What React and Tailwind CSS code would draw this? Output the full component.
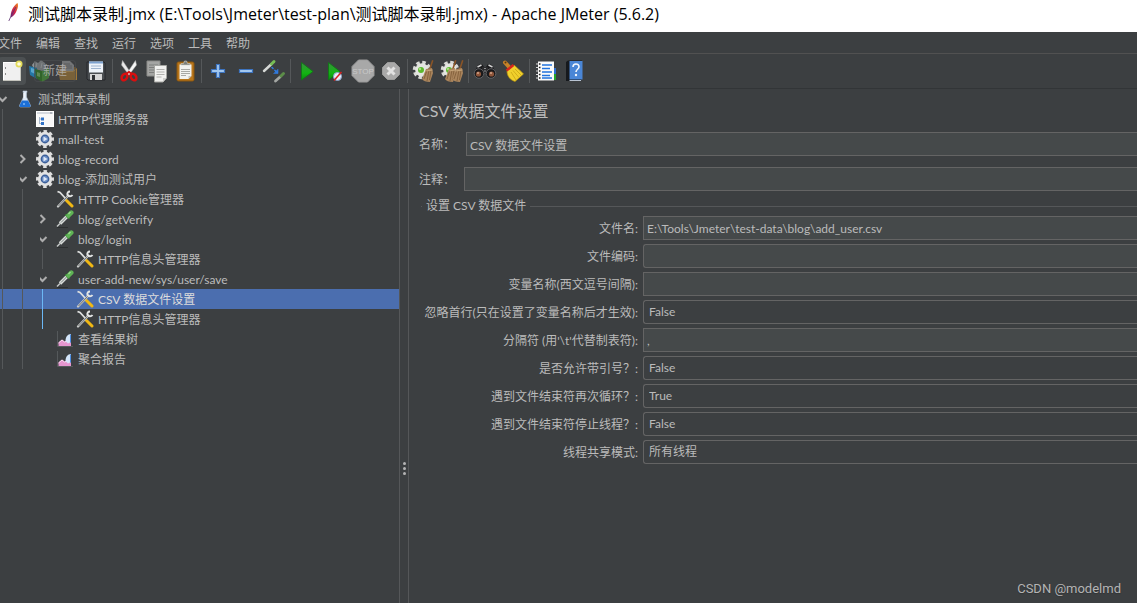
import clsx from 'clsx';

/* ---------- toolbar icons ---------- */

const NewIcon = () => (
  <svg viewBox="0 0 24 24" className="h-6 w-6">
    <rect x="3.5" y="3.5" width="17" height="18" fill="#f0f0f0" stroke="#fff" />
    <path d="M3 21.500h18M20.500 8v14" stroke="#c4c4bd" />
    <path d="M5.500 8v2M5.500 14v2" stroke="#8b8b8b" />
    <circle cx="19" cy="5" r="3.500" fill="#e3dc5a" />
    <circle cx="19" cy="5" r="1.800" fill="#fffde0" />
  </svg>
);

const TemplatesIcon = () => (
  <svg viewBox="0 0 24 24" className="h-6 w-6">
    <path d="M4 6l3-4 3 2 3-3 4 3 2 6-5 2-8-2z" fill="#8f9496" />
    <path d="M8 8l1-4M13 9l1-5" stroke="#b5babc" />
    <path d="M1 7l8 2v11l-7-4z" fill="#2477a6" />
    <path d="M3 9l4 1v5l-4-2z" fill="#5aa5cc" />
    <path d="M7 10l7 2v11l-6-4z" fill="#2b7d1c" />
    <path d="M14 12l7-3v10l-7 4z" fill="#479a34" />
    <path d="M9 13l3 1v4l-3-1z" fill="#79b962" />
  </svg>
);

const OpenIcon = () => (
  <svg viewBox="0 0 24 24" className="h-6 w-6">
    <path d="M3 9V6h6l2 2h9v13H5z" fill="#8e6427" />
    <path d="M6 2h8l4 4v8H6z" fill="#979899" />
    <path d="M8 5h6M8 7h8M8 9h8" stroke="#6c6d6e" />
    <path d="M2 12h15l4-3v12H4z" fill="#a27835" />
    <path d="M3 12.500h14l3-2.500" fill="none" stroke="#c49a55" />
  </svg>
);

const SaveIcon = () => (
  <svg viewBox="0 0 24 24" className="h-6 w-6">
    <path d="M3 3h17l1 1v17H4l-1-1z" fill="#4b4f52" stroke="#25272a" />
    <rect x="5" y="2.500" width="14" height="11" fill="#eef3f9" />
    <rect x="5" y="2.500" width="14" height="2" fill="#7da2cf" />
    <path d="M7 7h10M7 9.500h10" stroke="#9eb4cf" />
    <rect x="6" y="15" width="12" height="6" fill="#d6d6d6" />
    <rect x="8" y="16" width="3" height="5" fill="#303235" />
  </svg>
);

const CutIcon = () => (
  <svg viewBox="0 0 24 24" className="h-6 w-6" fill="none">
    <path d="M5.500 1.500L14.500 15l-2.500 1L4.500 6z" fill="#e9e9e9" stroke="#aaa" strokeWidth=".5" />
    <path d="M18.500 1.500L9.500 15l2.500 1 7.500-10z" fill="#f7f7f7" stroke="#aaa" strokeWidth=".5" />
    <ellipse cx="7.500" cy="18" rx="2.500" ry="3.500" stroke="#d80f0f" strokeWidth="2.500" transform="rotate(35 7.500 18)" />
    <ellipse cx="16.500" cy="18" rx="2.500" ry="3.500" stroke="#d80f0f" strokeWidth="2.500" transform="rotate(-35 16.500 18)" />
    <path d="M9 15l3-2 3 2" stroke="#d80f0f" strokeWidth="2" />
  </svg>
);

const CopyIcon = () => (
  <svg viewBox="0 0 24 24" className="h-6 w-6">
    <path d="M2 2h13v15H2z" fill="#a4a5a3" stroke="#8b8c89" />
    <path d="M4 6h9M4 8.500h9M4 11h9M4 13.500h5" stroke="#7d7e7c" />
    <path d="M9.500 6.500h12V19l-3.500 4H9.500z" fill="#f1f1ef" stroke="#a4a5a1" />
    <path d="M11.500 10.500h8M11.500 13h8M11.500 15.500h8M11.500 18h5" stroke="#b1b1ae" />
    <path d="M18 23v-4h3.500z" fill="#cfcfcc" />
  </svg>
);

const PasteIcon = () => (
  <svg viewBox="0 0 24 24" className="h-6 w-6">
    <rect x="4" y="3" width="17" height="19" rx="1.500" fill="#b9761b" stroke="#8a560f" />
    <path d="M6.500 5.500h12V17l-3 3h-9z" fill="#f2f2f0" />
    <path d="M8 10.500h9M8 12.500h9M8 14.500h9M8 16.500h5" stroke="#a9a9a6" />
    <path d="M15.500 20v-3h3z" fill="#c2c2bf" />
    <path d="M8 6V4.500h2.500L11.500 2h2l1 2.500H17V6z" fill="#7b7e7a" stroke="#d0d0ce" strokeWidth=".6" />
  </svg>
);

const PlusIcon = () => (
  <svg viewBox="0 0 24 24" className="h-6 w-6">
    <path d="M10.500 5.500h3v5h5v3h-5v5h-3v-5h-5v-3h5z" fill="#a3c8ef" stroke="#3d74c0" strokeWidth="1.200" />
  </svg>
);

const MinusIcon = () => (
  <svg viewBox="0 0 24 24" className="h-6 w-6">
    <path d="M5.500 10.500h13v3h-13z" fill="#a3c8ef" stroke="#3d74c0" strokeWidth="1.200" />
  </svg>
);

const ToggleIcon = () => (
  <svg viewBox="0 0 24 24" className="h-6 w-6" fill="none" strokeLinecap="round">
    <path d="M2 12l7-6.500" stroke="#d6d9d6" strokeWidth="2.400" />
    <path d="M9.500 5l2.500-2.500" stroke="#77bf55" strokeWidth="3" />
    <path d="M10 8.500l5 5" stroke="#2f7be0" strokeWidth="1.500" strokeDasharray="1.500 2.500" />
    <path d="M16 10.500v4h-4z" fill="#2f7be0" stroke="#2f7be0" strokeWidth=".6" />
    <path d="M13.500 22l4.500-4" stroke="#a4a7a4" strokeWidth="2.800" />
    <path d="M19 17l2.500-2.500" stroke="#5c8d49" strokeWidth="3" />
  </svg>
);

const StartIcon = () => (
  <svg viewBox="0 0 24 24" className="h-6 w-6">
    <defs>
      <linearGradient id="play" x1="0" y1="0" x2="0" y2="1">
        <stop offset="0" stopColor="#3a8f40" />
        <stop offset=".6" stopColor="#12b512" />
        <stop offset="1" stopColor="#0a8a10" />
      </linearGradient>
    </defs>
    <path d="M6.500 3.500L18 12.500 6.500 21z" fill="url(#play)" stroke="#0b7a12" strokeWidth=".8" />
  </svg>
);

const StartNoTimersIcon = () => (
  <svg viewBox="0 0 24 24" className="h-6 w-6">
    <path d="M5.500 3.500L17 12.500 5.500 21z" fill="url(#play)" stroke="#0b7a12" strokeWidth=".8" />
    <circle cx="14.500" cy="17.500" r="4" fill="#e9eef7" stroke="#8aa3cc" />
    <path d="M11 21.500l7.500-8.500" stroke="#d62020" strokeWidth="1.500" />
  </svg>
);

const StopIcon = () => (
  <svg viewBox="0 0 24 24" className="h-6 w-6">
    <path d="M7.500 1h9L23 7.500v9L16.500 23h-9L1 16.500v-9z" fill="#a8a8a8" stroke="#9b9b9b" />
    <text x="12" y="15" textAnchor="middle" fontSize="8" fontFamily="Liberation Sans, sans-serif" fill="#c9c9c9">
      STOP
    </text>
  </svg>
);

const ShutdownIcon = () => (
  <svg viewBox="0 0 24 24" className="h-6 w-6">
    <path d="M8.500 3.500h7l5 5v7l-5 5h-7l-5-5v-7z" fill="#a9a9a9" stroke="#9c9c9c" />
    <path d="M8.500 8.500l7 7M15.500 8.500l-7 7" stroke="#e2e2e2" strokeWidth="3" />
  </svg>
);

const Cog = ({ x = 0 }) => (
  <g transform={`translate(${x} 0)`}>
    <circle cx="10" cy="11" r="7.500" fill="none" stroke="#d9dad6" strokeWidth="3.500" strokeDasharray="3.400 2.490" />
    <circle cx="10" cy="11" r="6.800" fill="#e4e5e1" />
    <circle cx="9" cy="11" r="3" fill="#5cb82c" />
    <circle cx="8" cy="10" r="1.200" fill="#a6e07e" />
  </g>
);

const Broom = ({ x = 0 }) => (
  <g transform={`translate(${x} 0)`}>
    <path d="M20 1l1.500.5-3 9-1.500-.5z" fill="#8a5426" />
    <path d="M14 10l6-1 1 5-3 9c-4 0-7-1-8-3z" fill="#a9845c" />
    <path d="M15 11l-3 9M17 11l-2 11M19 11l-1.500 10" stroke="#7d5a36" strokeWidth=".8" />
    <path d="M13.500 12l7-1" stroke="#c7a67b" />
  </g>
);

const ClearIcon = () => (
  <svg viewBox="0 0 24 24" className="h-6 w-6">
    <Cog />
    <Broom />
  </svg>
);

const ClearAllIcon = () => (
  <svg viewBox="0 0 24 24" className="h-6 w-6">
    <Cog />
    <Broom x={-5} />
    <Broom x={2} />
  </svg>
);

const SearchIcon = () => (
  <svg viewBox="0 0 24 24" className="h-6 w-6">
    <path d="M5 6l4-1 2 3v9H2v-5z" fill="#1a1a1c" />
    <path d="M19 6l-4-1-2 3v9h9v-5z" fill="#1a1a1c" />
    <rect x="9" y="8" width="6" height="6" fill="#2b2b2d" />
    <path d="M11 9.500h2M11 12h2" stroke="#8b8d8f" />
    <path d="M4.500 8l4-2M15.500 6l4 2" stroke="#d4d4d4" strokeWidth="1.400" />
    <circle cx="6" cy="14.500" r="4.800" fill="#19191b" stroke="#6e7072" strokeWidth=".8" />
    <circle cx="18" cy="14.500" r="4.800" fill="#19191b" stroke="#6e7072" strokeWidth=".8" />
    <circle cx="5.500" cy="15" r="2.600" fill="#8e553a" />
    <circle cx="18.500" cy="15" r="2.600" fill="#8e553a" />
    <circle cx="5" cy="14" r="1" fill="#d3a78c" />
    <circle cx="18" cy="14" r="1" fill="#d3a78c" />
  </svg>
);

const ResetSearchIcon = () => (
  <svg viewBox="0 0 24 24" className="h-6 w-6">
    <path d="M4 3.500l4.500 5" stroke="#c78228" strokeWidth="4" strokeLinecap="round" />
    <circle cx="4.500" cy="3.500" r="1" fill="#5a3a10" />
    <path d="M6 12l7-6c3 3 6 5 9.500 9L14 22.500C9 21 6 17 6 12z" fill="#f0d02c" stroke="#b8940e" strokeWidth=".7" />
    <path d="M10 13l5 8M12 11.500l6 7M14 10l6 6" stroke="#c9a414" strokeWidth=".8" />
    <path d="M5.500 11.500L12.500 6" stroke="#d7241c" strokeWidth="2.500" />
  </svg>
);

const FunctionIcon = () => (
  <svg viewBox="0 0 24 24" className="h-6 w-6">
    <path d="M19 9h3v6h-3z" fill="#2f6fd0" />
    <path d="M19 15h3v6h-3z" fill="#22a52a" />
    <rect x="4" y="2.500" width="16" height="19" fill="#fafafa" />
    <path d="M8 6h10M8 9.500h8M8 13h10M8 16.500h8M8 19h10" stroke="#2273dd" strokeWidth="1.300" />
    <path d="M2 5h4M2 8.500h4M2 12h4M2 15.500h4M2 19h4" stroke="#d9d9d9" strokeWidth="1.200" />
    <path d="M5 5h1.500M5 8.500h1.500M5 12h1.500M5 15.500h1.500M5 19h1.500" stroke="#222" strokeWidth="1.500" />
  </svg>
);

const HelpIcon = () => (
  <svg viewBox="0 0 24 24" className="h-6 w-6">
    <path d="M4 3l2-1.500h14V20l-2 2H4z" fill="#16191d" />
    <rect x="7.500" y="2" width="13" height="18.500" fill="#4a86d6" />
    <path d="M7.500 21.500H19" stroke="#b9c4d3" />
    <path d="M11 8c0-4 6-4 6-.3 0 2.600-3 2.500-3 5.300" fill="none" stroke="#f2f6fc" strokeWidth="1.600" />
    <circle cx="14" cy="16" r="1.200" fill="#f2f6fc" />
  </svg>
);

/* ---------- tree icons ---------- */

const FlaskIcon = () => (
  <svg viewBox="0 0 18 18" className="size-4.5">
    <path d="M7 1h4v1.500h-.5V7L14.500 15.500c0 1-.5 1.500-1.500 1.500H5c-1 0-1.500-.5-1.500-1.500L7.500 7V2.500H7z" fill="#dfe9f5" stroke="#aebccb" strokeWidth=".6" />
    <path d="M6 10.500h6l2.500 5c0 1-.5 1.500-1.500 1.500H5c-1 0-1.500-.5-1.500-1.500z" fill="#1c6fd6" />
    <path d="M8 3v5" stroke="#fff" />
    <circle cx="8" cy="14" r="1" fill="#7db6f5" />
  </svg>
);

const ProxyIcon = () => (
  <svg viewBox="0 0 18 18" className="size-4.5">
    <rect x=".5" y="1.500" width="17" height="15" fill="#f8f8f8" stroke="#fff" />
    <rect x="1" y="2" width="16" height="2" fill="#d5d9df" />
    <path d="M14 3h2" stroke="#8a909a" />
    <path d="M3.500 7v7M3.500 9H6M3.500 13.500H6" stroke="#a9b8cc" />
    <rect x="5" y="7.500" width="3" height="3" fill="#3172c6" />
    <rect x="5" y="12" width="3" height="3" fill="#3172c6" />
  </svg>
);

const GearIcon = () => (
  <svg viewBox="0 0 18 18" className="size-4.5">
    <circle cx="9" cy="9" r="7" fill="none" stroke="#dcdcdc" strokeWidth="4" strokeDasharray="3.200 2.298" strokeDashoffset="1.600" />
    <circle cx="9" cy="9" r="7.200" fill="#e2e2e2" />
    <circle cx="9" cy="9" r="4.400" fill="#3c5f98" />
    <circle cx="9" cy="9" r="3" fill="#6c8fc6" />
    <path d="M7.500 6.500l4 2.500-4 2.500z" fill="#dfe8f5" />
  </svg>
);

const ToolsIcon = () => (
  <svg viewBox="0 0 18 18" className="size-4.5" fill="none">
    <path d="M1.500 1.500l2.500 1 6 6.500" stroke="#dfe1e0" strokeWidth="1.800" />
    <path d="M10.500 10.500l5.500 5.500" stroke="#f0b814" strokeWidth="3" strokeLinecap="round" />
    <path d="M2 16.500L12.500 5.500" stroke="#c9cbca" strokeWidth="2.200" strokeLinecap="round" />
    <path d="M2.500 16L12 6" stroke="#45484a" strokeWidth=".7" />
    <path d="M14 1.500c-2 0-3 1.500-2.500 3.500 1 1.500 3.500 2 5 0" stroke="#e4e6e5" strokeWidth="2" />
  </svg>
);

const DropperIcon = () => (
  <svg viewBox="0 0 18 18" className="size-4.5" fill="none">
    <path d="M1 17.500h11" stroke="#2c2f30" />
    <path d="M1 16.500l3-3" stroke="#c4c8c6" strokeWidth="1.400" />
    <path d="M4 13.500l7-7" stroke="#d9dddb" strokeWidth="3.400" />
    <path d="M5 12.500l6-6" stroke="#7a8280" strokeWidth="1" />
    <path d="M9.500 4.500l4 4" stroke="#3d8a3a" strokeWidth="2" />
    <path d="M12.500 5.500l2.800-2.800" stroke="#5fb355" strokeWidth="4.500" strokeLinecap="round" />
    <path d="M12.500 4l2-2" stroke="#a3dc98" strokeWidth="1.200" />
  </svg>
);

const ReportIcon = () => (
  <svg viewBox="0 0 18 18" className="size-4.5">
    <path d="M1.500 1v15.500H17" fill="none" stroke="#55595b" />
    <path d="M2.500 16v-3.500l3.500-3 2.500 2 3-1 3.500 2V16z" fill="#e596cf" />
    <path d="M2.500 13l3.500-3 2.500 2 3-1" fill="none" stroke="#fbdcf1" />
    <path d="M9.500 11c0-4 2-7 5.500-7v8l-3 1.500z" fill="#d3e5fa" />
    <path d="M14.500 4.500v8" stroke="#4d8ee0" />
  </svg>
);

const FeatherIcon = () => (
  <svg viewBox="0 0 12 20" className="h-5 w-3">
    <defs>
      <linearGradient id="feather" x1="0" y1="1" x2="1" y2="0">
        <stop offset="0" stopColor="#6d2a7c" />
        <stop offset=".45" stopColor="#d0214b" />
        <stop offset="1" stopColor="#f08a1d" />
      </linearGradient>
    </defs>
    <path d="M9.500 1c1 2 .5 5-1 8C7.500 12 5.500 14 3 15.500 2 12 4 7 6 4.500 7.500 2.500 8.500 1.500 9.500 1z" fill="url(#feather)" />
    <path d="M.8 19L4 12l4-7" fill="none" stroke="#5a2d6e" strokeWidth=".8" />
  </svg>
);

const toolGroups = [
  [
    { label: '新建', icon: NewIcon, hovered: true },
    { label: '模板', icon: TemplatesIcon },
    { label: '打开', icon: OpenIcon },
    { label: '保存', icon: SaveIcon },
  ],
  [
    { label: '剪切', icon: CutIcon },
    { label: '复制', icon: CopyIcon },
    { label: '粘贴', icon: PasteIcon },
  ],
  [
    { label: '全部展开', icon: PlusIcon },
    { label: '全部折叠', icon: MinusIcon },
    { label: '切换', icon: ToggleIcon },
  ],
  [
    { label: '启动', icon: StartIcon },
    { label: '不停顿开始', icon: StartNoTimersIcon },
    { label: '停止', icon: StopIcon },
    { label: '关闭', icon: ShutdownIcon },
  ],
  [
    { label: '清除', icon: ClearIcon },
    { label: '清除全部', icon: ClearAllIcon },
  ],
  [
    { label: '查找', icon: SearchIcon },
    { label: '重置搜索', icon: ResetSearchIcon },
  ],
  [
    { label: '函数助手', icon: FunctionIcon },
    { label: '帮助', icon: HelpIcon },
  ],
];

const menus = ['文件', '编辑', '查找', '运行', '选项', '工具', '帮助'];

const treeRows = [
  { depth: 0, icon: FlaskIcon, label: '测试脚本录制', open: true },
  { depth: 1, icon: ProxyIcon, label: 'HTTP代理服务器' },
  { depth: 1, icon: GearIcon, label: 'mall-test' },
  { depth: 1, icon: GearIcon, label: 'blog-record', open: false },
  { depth: 1, icon: GearIcon, label: 'blog-添加测试用户', open: true },
  { depth: 2, icon: ToolsIcon, label: 'HTTP Cookie管理器' },
  { depth: 2, icon: DropperIcon, label: 'blog/getVerify', open: false },
  { depth: 2, icon: DropperIcon, label: 'blog/login', open: true },
  { depth: 3, icon: ToolsIcon, label: 'HTTP信息头管理器' },
  { depth: 2, icon: DropperIcon, label: 'user-add-new/sys/user/save', open: true },
  { depth: 3, icon: ToolsIcon, label: 'CSV 数据文件设置', selected: true, active: true },
  { depth: 3, icon: ToolsIcon, label: 'HTTP信息头管理器', active: true },
  { depth: 2, icon: ReportIcon, label: '查看结果树' },
  { depth: 2, icon: ReportIcon, label: '聚合报告' },
];

const fields = [
  { id: 'filename', label: '文件名:', value: 'E:\\Tools\\Jmeter\\test-data\\blog\\add_user.csv' },
  { id: 'encoding', label: '文件编码:', value: '', rounded: true },
  { id: 'variables', label: '变量名称(西文逗号间隔):', value: '' },
  { id: 'ignoreFirst', label: '忽略首行(只在设置了变量名称后才生效):', value: 'False', options: ['False', 'True'] },
  { id: 'delimiter', label: "分隔符 (用'\\t'代替制表符):", value: ',' },
  { id: 'quoted', label: '是否允许带引号？:', value: 'False', options: ['False', 'True'] },
  { id: 'recycle', label: '遇到文件结束符再次循环？:', value: 'True', options: ['True', 'False'] },
  { id: 'stopThread', label: '遇到文件结束符停止线程？:', value: 'False', options: ['False', 'True'] },
  { id: 'shareMode', label: '线程共享模式:', value: '所有线程', options: ['所有线程', '当前线程组', '当前线程'] },
];

const inputStyle = 'h-6 min-w-0 flex-1 border border-r-0 border-[#646464] bg-[#45494a] px-[3px] outline-none';

const Chevron = ({ open }) => (
  <svg viewBox="0 0 16 20" className="h-5 w-4 shrink-0" fill="none" stroke="#adadad" strokeWidth="2">
    {open === true && <path d="M-1.500 8l4 4 4-4" />}
    {open === false && <path d="M.5 6l4 4-4 4" />}
  </svg>
);

const TreeRow = ({ row }) => {
  const Icon = row.icon;
  return (
    <li
      role="treeitem"
      aria-selected={!!row.selected}
      className={clsx('flex h-5 items-center whitespace-nowrap', row.selected && 'bg-[#4b6eaf] text-[#dcdcdc]')}
    >
      {Array.from({ length: row.depth }, (_, i) => (
        <span key={i} className="flex h-full w-5 shrink-0 pl-0.5">
          <span className={clsx('border-l', row.active && i === 2 ? 'border-[#6cb8f5]' : 'border-[#55585a]')} />
        </span>
      ))}
      <Chevron open={row.open} />
      <Icon />
      <span className="ml-1 pt-0.5">{row.label}</span>
    </li>
  );
};

const Field = ({ field }) => (
  <div className="flex items-center gap-[5px]">
    <label htmlFor={field.id} className="w-[229px] shrink-0 pt-0.5 text-right whitespace-nowrap">
      {field.label}
    </label>
    {field.options ? (
      <select
        id={field.id}
        defaultValue={field.value}
        className="h-6 min-w-0 flex-1 appearance-none rounded-l-[3px] border border-r-0 border-[#646464] bg-[#3c3f41] px-[5px] outline-none"
      >
        {field.options.map((option) => (
          <option key={option}>{option}</option>
        ))}
      </select>
    ) : (
      <input id={field.id} defaultValue={field.value} className={clsx(inputStyle, field.rounded && 'rounded-l-[3px]')} />
    )}
  </div>
);

export default function App() {
  return (
    <div className="relative flex min-h-screen flex-col overflow-hidden bg-[#3c3f41] font-[Lato,'Noto_Sans_CJK_SC',sans-serif] text-[12px] leading-5 text-[#bbbbbb]">
      <header className="flex h-8 items-start gap-2 bg-white pt-0.5 pl-2 text-black">
        <FeatherIcon />
        <h1 className="font-['Open_Sans','Noto_Sans_CJK_SC',sans-serif] text-[16px] leading-6 whitespace-nowrap">
          测试脚本录制.jmx (E:\Tools\Jmeter\test-plan\测试脚本录制.jmx) - Apache JMeter (5.6.2)
        </h1>
      </header>

      <nav className="flex h-[22px] items-center border-b border-[#515151] pt-0.5">
        <div className="-ml-[9px] flex">
          {menus.map((menu) => (
            <button key={menu} type="button" className="px-[7px]">
              {menu}
            </button>
          ))}
        </div>
      </nav>

      <div className="relative flex h-[35px] items-center border-b border-[#323537]">
        <div className="-ml-0.5 flex items-center">
          {toolGroups.map((group, index) => (
            <div key={index} className="flex items-center">
              {index > 0 && <span className="mx-0.5 h-6 border-l border-[#55585a]" />}
              {group.map(({ label, icon: Icon, hovered }) => (
                <button
                  key={label}
                  type="button"
                  aria-label={label}
                  className={clsx('flex h-7 w-7 items-center justify-center rounded-sm', hovered && 'bg-[#4c5052]')}
                >
                  <Icon />
                </button>
              ))}
            </div>
          ))}
        </div>
        <div
          role="tooltip"
          className="absolute top-1.5 left-[34px] rounded-sm border border-[#4c4f51]/60 bg-[#3c3f41]/40 px-2 text-[#bbbbbb]/80"
        >
          新建
        </div>
      </div>

      <div className="flex flex-1">
        <aside className="w-[400px] shrink-0 border-r border-[#555759]">
          <ul role="tree">
            {treeRows.map((row, index) => (
              <TreeRow key={index} row={row} />
            ))}
          </ul>
        </aside>

        <div className="flex w-[9px] shrink-0 flex-col items-center gap-0.5 border-r border-[#555759] pt-[373px]">
          <span className="size-[3px] rounded-full bg-[#b4b4b4]" />
          <span className="size-[3px] rounded-full bg-[#b4b4b4]" />
          <span className="size-[3px] rounded-full bg-[#b4b4b4]" />
        </div>

        <main className="min-w-0 flex-1 pt-2.5">
          <h2 className="pl-2.5 text-[16px] leading-6">CSV 数据文件设置</h2>
          <div className="mt-[9px] flex items-center pl-2.5">
            <label htmlFor="name" className="w-[47px] shrink-0 pt-0.5">
              名称：
            </label>
            <input id="name" defaultValue="CSV 数据文件设置" className={inputStyle} />
          </div>
          <div className="mt-[11px] flex items-center pl-2.5">
            <label htmlFor="comment" className="w-[45px] shrink-0 pt-0.5">
              注释：
            </label>
            <input id="comment" className={inputStyle} />
          </div>

          <section aria-labelledby="csv-settings" className="mt-[5px]">
            <div className="flex items-center gap-1 pl-3">
              <span className="w-px border-t border-[#555759]" />
              <h3 id="csv-settings">设置 CSV 数据文件</h3>
              <span className="flex-1 border-t border-[#555759]" />
            </div>
            <div className="flex flex-col gap-1">
              {fields.map((field) => (
                <Field key={field.id} field={field} />
              ))}
            </div>
          </section>
        </main>
      </div>

      <div className="absolute right-4 bottom-1 font-[Roboto,sans-serif] text-[13px] text-[#b4b4b4] text-shadow-xs">
        CSDN @modelmd
      </div>
    </div>
  );
}
